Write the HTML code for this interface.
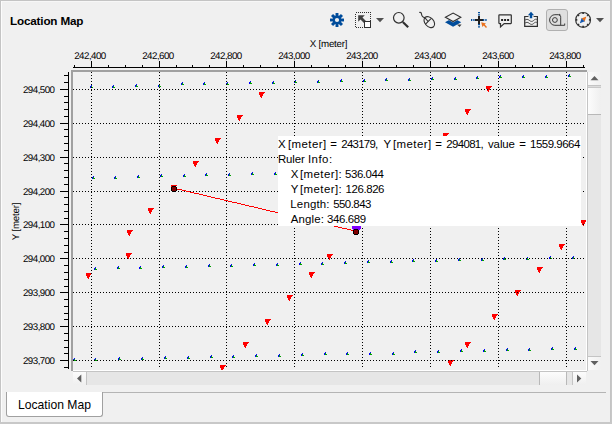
<!DOCTYPE html>
<html><head><meta charset="utf-8"><title>Location Map</title>
<style>
html,body{margin:0;padding:0}
body{width:612px;height:424px;background:#f0f0f0;position:relative;overflow:hidden;font-family:"Liberation Sans",sans-serif;color:#000}
.abs{position:absolute}
.title{position:absolute;left:10px;top:13px;font-size:11.700px;font-weight:bold;line-height:15px;white-space:nowrap;letter-spacing:-.17px}
.xl{position:absolute;top:51px;width:60px;text-align:center;font-size:9.750px;letter-spacing:-.53px;text-rendering:geometricPrecision;line-height:11px;white-space:nowrap}
.yl{position:absolute;left:9px;width:45.500px;text-align:right;font-size:9.750px;letter-spacing:-.53px;text-rendering:geometricPrecision;line-height:11px;white-space:nowrap}
.xt{position:absolute;left:298.500px;top:39px;width:60px;text-align:center;font-size:9.750px;letter-spacing:-.25px;text-rendering:geometricPrecision;line-height:11px;white-space:nowrap}
.yt{position:absolute;left:-14.5px;top:216px;width:60px;text-align:center;font-size:9.750px;letter-spacing:-.23px;text-rendering:geometricPrecision;line-height:11px;white-space:nowrap;transform:rotate(-90deg);transform-origin:50% 50%}
.tip{position:absolute;left:278px;top:136px;width:303px;height:90px;background:#fff;font-size:11.450px;line-height:15px;white-space:pre;overflow:hidden}
.tip span{position:absolute;white-space:pre}
.tab{position:absolute;left:6px;top:392px;width:95px;height:24px;background:#fff;border:1px solid #a0a0a0;border-top:none;border-radius:0 0 3px 3px;font-size:12.150px;line-height:27px;text-align:center;white-space:nowrap}
</style></head><body>
<!-- window borders -->
<div class="abs" style="left:0;top:0;width:612px;height:1px;background:#c4c4c4"></div>
<div class="abs" style="left:0;top:0;width:1px;height:424px;background:#c4c4c4"></div>
<div class="abs" style="left:0;top:422px;width:612px;height:2px;background:#c8c8c8"></div>
<div class="abs" style="left:610px;top:0;width:1px;height:422px;background:#c4c4c4"></div>
<div class="abs" style="left:611px;top:0;width:1px;height:422px;background:#c8c8c8"></div>
<div class="abs" style="left:1px;top:1px;width:1px;height:421px;background:#fcfcfc"></div>
<div class="abs" style="left:2px;top:1px;width:608px;height:1px;background:#f7f7f7"></div>
<div class="title">Location Map</div>
<svg width="612" height="40" viewBox="0 0 612 40" style="position:absolute;left:0;top:0">
<rect x="335.55" y="13" width="2.9" height="4" fill="#004c9b" transform="rotate(0 337 20)"/><rect x="335.55" y="13" width="2.9" height="4" fill="#004c9b" transform="rotate(45 337 20)"/><rect x="335.55" y="13" width="2.9" height="4" fill="#004c9b" transform="rotate(90 337 20)"/><rect x="335.55" y="13" width="2.9" height="4" fill="#004c9b" transform="rotate(135 337 20)"/><rect x="335.55" y="13" width="2.9" height="4" fill="#004c9b" transform="rotate(180 337 20)"/><rect x="335.55" y="13" width="2.9" height="4" fill="#004c9b" transform="rotate(225 337 20)"/><rect x="335.55" y="13" width="2.9" height="4" fill="#004c9b" transform="rotate(270 337 20)"/><rect x="335.55" y="13" width="2.9" height="4" fill="#004c9b" transform="rotate(315 337 20)"/><circle cx="337" cy="20" r="4.400" fill="#004c9b"/><circle cx="337" cy="20" r="2.100" fill="#f0f0f0"/>
<!-- selection -->
<rect x="355.5" y="12.5" width="15" height="15" fill="none" stroke="#303030" stroke-width="1" stroke-dasharray="1 1" shape-rendering="crispEdges"/>
<path d="M358.200 15.200h6.600l-2.300 2.300 3.700 3.700-2 2-3.700-3.700-2.300 2.300z" fill="#404040"/>
<rect x="364.5" y="21.5" width="6" height="6" fill="#fff" stroke="#303030" stroke-width="1" shape-rendering="crispEdges"/>
<path d="M376 18h8l-4 4.2z" fill="#505050"/>
<!-- magnifier -->
<circle cx="398.8" cy="17.8" r="5.3" fill="none" stroke="#303030" stroke-width="1.2"/>
<path d="M402.8 22l5.4 5.2" stroke="#303030" stroke-width="2.2" fill="none"/>
<!-- mouse -->
<g fill="none" stroke="#303030" stroke-width="1.100">
<path d="M419.200 12.400c1.400-.5 2.100 .3 2.300 1.700s.3 2 1.300 2.600l2.300 1.300"/>
<ellipse cx="429.300" cy="22.100" rx="6.300" ry="4.300" transform="rotate(47.600 429.300 22.100)"/>
<path d="M425.300 24.400L431 18.700M425 17.900L428.100 21.500"/>
</g>
<!-- layers -->
<path d="M445 22.200L453.100 26.800 461.200 22.200 453.100 17.800z" fill="#004c9b"/>
<path d="M444 17.300L453.100 12.300 462.200 17.300 453.100 22.600z" fill="#f0f0f0"/>
<path d="M445.400 17.300L453.100 13.100 460.800 17.300 453.100 21.500z" fill="none" stroke="#303030" stroke-width="1.1"/>
<path d="M457 24.400h4.600l-2 2.600z" fill="#404040"/>
<!-- crosshair -->
<path d="M475 20h8M479 16v8" stroke="#202020" stroke-width="2" fill="none" shape-rendering="crispEdges"/>
<path d="M471 20h4M483 20h4M479 12v4M479 24v4" stroke="#004c9b" stroke-width="2" stroke-dasharray="1.300 1" fill="none"/>
<path d="M481.200 22.200l4.800 1.200-1.300 1.200 2.300 2.300-1 1-2.300-2.300-1.300 1.300z" fill="#e8701c"/>
<!-- comment -->
<path d="M499.400 14.800h11.400a.5 .5 0 0 1 .5 .5v7.800a.5 .5 0 0 1-.5 .5h-6.600l-3.700 3.300v-3.300h-1.100a.5 .5 0 0 1-.5-.5v-7.800a.5 .5 0 0 1 .5-.5z" fill="none" stroke="#303030" stroke-width="1.200"/>
<rect x="501.100" y="19" width="2" height="2" fill="#202020"/><rect x="504.100" y="19" width="2" height="2" fill="#202020"/><rect x="507.100" y="19" width="2" height="2" fill="#202020"/>
<!-- export -->
<path d="M528.500 16.500h-3.800v9.900h12.700v-9.900h-3.800" fill="none" stroke="#303030" stroke-width="1.200"/>
<path d="M524.700 20.300c1.700-1.300 3-1.300 4.500 0s3 1.600 4.400 .2 2.500-1.700 3.800-.6M524.700 23.300c1.700-1.300 3-1.300 4.500 0s3 1.600 4.400 .2 2.500-1.700 3.800-.6" fill="none" stroke="#404040" stroke-width=".9"/>
<path d="M531 11.800l3.100 3.500h-1.900v3h-2.400v-3h-1.900z" fill="#004c9b"/>
<!-- ruler pressed -->
<rect x="546.500" y="9.500" width="21" height="21" rx="2.500" fill="#dfdfdf" stroke="#b0b0b0" stroke-width="1"/>
<g fill="none" stroke="#3a3a3a" stroke-width="1">
<circle cx="554.900" cy="20" r="2.400"/>
<path d="M558.400 14.700H554.900A5.300 5.300 0 0 0 554.900 25.300H564.700V23.500M558.400 14.700c1.500 0 2.300 .9 2.300 2.500V25.300"/>
<circle cx="559.600" cy="14.900" r=".5"/>
</g>
<!-- compass -->
<circle cx="583.1" cy="19.9" r="7.400" fill="none" stroke="#303030" stroke-width="1.200"/>
<path d="M590.30 19.90L588.90 19.90M588.19 24.99L587.20 24.00M583.10 27.10L583.10 25.70M578.01 24.99L579.00 24.00M575.90 19.90L577.30 19.90M578.01 14.81L579.00 15.80M583.10 12.70L583.10 14.10M588.19 14.81L587.20 15.80" stroke="#303030" stroke-width="1.700" fill="none"/>
<path d="M586.400 16.600l-5.100 1.900 1.800 1.400 1.400 1.800z" fill="#e8701c"/>
<path d="M579.800 23.200l5.100-1.900-1.800-1.400-1.400-1.800z" fill="#1458b0"/>
<path d="M596 18h8l-4 4.200z" fill="#505050"/>
</svg>
<div class="xt">X [meter]</div>
<div class="yt">Y [meter]</div>
<div class="xl" style="left:60px">242,400</div><div class="xl" style="left:128px">242,600</div><div class="xl" style="left:196px">242,800</div><div class="xl" style="left:264px">243,000</div><div class="xl" style="left:332px">243,200</div><div class="xl" style="left:400px">243,400</div><div class="xl" style="left:468px">243,600</div><div class="xl" style="left:535px">243,800</div><div class="yl" style="top:85px">294,500</div><div class="yl" style="top:119px">294,400</div><div class="yl" style="top:153px">294,300</div><div class="yl" style="top:187px">294,200</div><div class="yl" style="top:220px">294,100</div><div class="yl" style="top:254px">294,000</div><div class="yl" style="top:288px">293,900</div><div class="yl" style="top:322px">293,800</div><div class="yl" style="top:356px">293,700</div>
<svg width="612" height="424" viewBox="0 0 612 424" shape-rendering="crispEdges" style="position:absolute;left:0;top:0">
<defs>
<clipPath id="cv"><rect x="73" y="72" width="513" height="298"/></clipPath>
</defs>
<rect x="71" y="70" width="516" height="2" fill="#a0a0a0"/><rect x="71" y="70" width="2" height="301" fill="#a0a0a0"/><rect x="73" y="370" width="514" height="1" fill="#ffffff"/><rect x="73" y="371" width="514" height="1" fill="#c4c4c4"/><rect x="587" y="72" width="1" height="299" fill="#c4c4c4"/><rect x="586" y="72" width="1" height="299" fill="#ffffff"/><rect x="73" y="67" width="512" height="1" fill="#000"/><rect x="74" y="65" width="1" height="2" fill="#000"/><rect x="91" y="61" width="1" height="6" fill="#000"/><rect x="108" y="65" width="1" height="2" fill="#000"/><rect x="125" y="65" width="1" height="2" fill="#000"/><rect x="142" y="65" width="1" height="2" fill="#000"/><rect x="159" y="61" width="1" height="6" fill="#000"/><rect x="176" y="65" width="1" height="2" fill="#000"/><rect x="192" y="65" width="1" height="2" fill="#000"/><rect x="209" y="65" width="1" height="2" fill="#000"/><rect x="226" y="61" width="1" height="6" fill="#000"/><rect x="243" y="65" width="1" height="2" fill="#000"/><rect x="260" y="65" width="1" height="2" fill="#000"/><rect x="277" y="65" width="1" height="2" fill="#000"/><rect x="294" y="61" width="1" height="6" fill="#000"/><rect x="311" y="65" width="1" height="2" fill="#000"/><rect x="328" y="65" width="1" height="2" fill="#000"/><rect x="345" y="65" width="1" height="2" fill="#000"/><rect x="362" y="61" width="1" height="6" fill="#000"/><rect x="379" y="65" width="1" height="2" fill="#000"/><rect x="396" y="65" width="1" height="2" fill="#000"/><rect x="413" y="65" width="1" height="2" fill="#000"/><rect x="430" y="61" width="1" height="6" fill="#000"/><rect x="447" y="65" width="1" height="2" fill="#000"/><rect x="464" y="65" width="1" height="2" fill="#000"/><rect x="481" y="65" width="1" height="2" fill="#000"/><rect x="498" y="61" width="1" height="6" fill="#000"/><rect x="515" y="65" width="1" height="2" fill="#000"/><rect x="532" y="65" width="1" height="2" fill="#000"/><rect x="549" y="65" width="1" height="2" fill="#000"/><rect x="566" y="61" width="1" height="6" fill="#000"/><rect x="583" y="65" width="1" height="2" fill="#000"/><rect x="68" y="72" width="1" height="297" fill="#000"/><rect x="64" y="75" width="4" height="1" fill="#000"/><rect x="64" y="82" width="4" height="1" fill="#000"/><rect x="60" y="89" width="8" height="1" fill="#000"/><rect x="64" y="96" width="4" height="1" fill="#000"/><rect x="64" y="102" width="4" height="1" fill="#000"/><rect x="64" y="109" width="4" height="1" fill="#000"/><rect x="64" y="116" width="4" height="1" fill="#000"/><rect x="60" y="123" width="8" height="1" fill="#000"/><rect x="64" y="129" width="4" height="1" fill="#000"/><rect x="64" y="136" width="4" height="1" fill="#000"/><rect x="64" y="143" width="4" height="1" fill="#000"/><rect x="64" y="150" width="4" height="1" fill="#000"/><rect x="60" y="157" width="8" height="1" fill="#000"/><rect x="64" y="163" width="4" height="1" fill="#000"/><rect x="64" y="170" width="4" height="1" fill="#000"/><rect x="64" y="177" width="4" height="1" fill="#000"/><rect x="64" y="184" width="4" height="1" fill="#000"/><rect x="60" y="191" width="8" height="1" fill="#000"/><rect x="64" y="197" width="4" height="1" fill="#000"/><rect x="64" y="204" width="4" height="1" fill="#000"/><rect x="64" y="211" width="4" height="1" fill="#000"/><rect x="64" y="218" width="4" height="1" fill="#000"/><rect x="60" y="224" width="8" height="1" fill="#000"/><rect x="64" y="231" width="4" height="1" fill="#000"/><rect x="64" y="238" width="4" height="1" fill="#000"/><rect x="64" y="245" width="4" height="1" fill="#000"/><rect x="64" y="252" width="4" height="1" fill="#000"/><rect x="60" y="258" width="8" height="1" fill="#000"/><rect x="64" y="265" width="4" height="1" fill="#000"/><rect x="64" y="272" width="4" height="1" fill="#000"/><rect x="64" y="279" width="4" height="1" fill="#000"/><rect x="64" y="286" width="4" height="1" fill="#000"/><rect x="60" y="292" width="8" height="1" fill="#000"/><rect x="64" y="299" width="4" height="1" fill="#000"/><rect x="64" y="306" width="4" height="1" fill="#000"/><rect x="64" y="313" width="4" height="1" fill="#000"/><rect x="64" y="319" width="4" height="1" fill="#000"/><rect x="60" y="326" width="8" height="1" fill="#000"/><rect x="64" y="333" width="4" height="1" fill="#000"/><rect x="64" y="340" width="4" height="1" fill="#000"/><rect x="64" y="347" width="4" height="1" fill="#000"/><rect x="64" y="353" width="4" height="1" fill="#000"/><rect x="60" y="360" width="8" height="1" fill="#000"/><rect x="64" y="367" width="4" height="1" fill="#000"/>
<g clip-path="url(#cv)">
<path d="M91 85h1v1h-1zM90 86h1v2h-1zM113 85h1v1h-1zM112 86h1v2h-1zM136 84h1v1h-1zM135 85h1v2h-1zM159 84h1v1h-1zM158 85h1v2h-1zM182 82h1v1h-1zM181 83h1v2h-1zM204 82h1v1h-1zM203 83h1v2h-1zM227 82h1v1h-1zM226 83h1v2h-1zM250 81h1v1h-1zM249 82h1v2h-1zM273 81h1v1h-1zM272 82h1v2h-1zM295 80h1v1h-1zM294 81h1v2h-1zM318 80h1v1h-1zM317 81h1v2h-1zM341 79h1v1h-1zM340 80h1v2h-1zM364 79h1v1h-1zM363 80h1v2h-1zM386 78h1v1h-1zM385 79h1v2h-1zM409 78h1v1h-1zM408 79h1v2h-1zM432 77h1v1h-1zM431 78h1v2h-1zM455 77h1v1h-1zM454 78h1v2h-1zM477 76h1v1h-1zM476 77h1v2h-1zM500 75h1v1h-1zM499 76h1v2h-1zM523 75h1v1h-1zM522 76h1v2h-1zM546 75h1v1h-1zM545 76h1v2h-1zM569 74h1v1h-1zM568 75h1v2h-1zM93 176h1v1h-1zM92 177h1v2h-1zM115 176h1v1h-1zM114 177h1v2h-1zM138 175h1v1h-1zM137 176h1v2h-1zM161 174h1v1h-1zM160 175h1v2h-1zM184 174h1v1h-1zM183 175h1v2h-1zM206 173h1v1h-1zM205 174h1v2h-1zM229 173h1v1h-1zM228 174h1v2h-1zM252 172h1v1h-1zM251 173h1v2h-1zM275 172h1v1h-1zM274 173h1v2h-1zM95 267h1v1h-1zM94 268h1v2h-1zM118 266h1v1h-1zM117 267h1v2h-1zM140 266h1v1h-1zM139 267h1v2h-1zM163 265h1v1h-1zM162 266h1v2h-1zM186 265h1v1h-1zM185 266h1v2h-1zM209 264h1v1h-1zM208 265h1v2h-1zM231 264h1v1h-1zM230 265h1v2h-1zM254 263h1v1h-1zM253 264h1v2h-1zM277 263h1v1h-1zM276 264h1v2h-1zM300 262h1v1h-1zM299 263h1v2h-1zM322 262h1v1h-1zM321 263h1v2h-1zM345 261h1v1h-1zM344 262h1v2h-1zM368 260h1v1h-1zM367 261h1v2h-1zM391 260h1v1h-1zM390 261h1v2h-1zM413 259h1v1h-1zM412 260h1v2h-1zM436 259h1v1h-1zM435 260h1v2h-1zM459 258h1v1h-1zM458 259h1v2h-1zM482 258h1v1h-1zM481 259h1v2h-1zM504 257h1v1h-1zM503 258h1v2h-1zM527 257h1v1h-1zM526 258h1v2h-1zM550 256h1v1h-1zM549 257h1v2h-1zM573 256h1v1h-1zM572 257h1v2h-1zM74 358h1v1h-1zM73 359h1v2h-1zM95 358h1v1h-1zM94 359h1v2h-1zM119 357h1v1h-1zM118 358h1v2h-1zM142 357h1v1h-1zM141 358h1v2h-1zM165 356h1v1h-1zM164 357h1v2h-1zM188 356h1v1h-1zM187 357h1v2h-1zM211 355h1v1h-1zM210 356h1v2h-1zM233 355h1v1h-1zM232 356h1v2h-1zM256 354h1v1h-1zM255 355h1v2h-1zM279 354h1v1h-1zM278 355h1v2h-1zM302 353h1v1h-1zM301 354h1v2h-1zM325 352h1v1h-1zM324 353h1v2h-1zM347 352h1v1h-1zM346 353h1v2h-1zM370 352h1v1h-1zM369 353h1v2h-1zM393 352h1v1h-1zM392 353h1v2h-1zM415 350h1v1h-1zM414 351h1v2h-1zM438 350h1v1h-1zM437 351h1v2h-1zM461 349h1v1h-1zM460 350h1v2h-1zM484 349h1v1h-1zM483 350h1v2h-1zM507 348h1v1h-1zM506 349h1v2h-1zM529 348h1v1h-1zM528 349h1v2h-1zM552 347h1v1h-1zM551 348h1v2h-1zM575 347h1v1h-1zM574 348h1v2h-1z" fill="#0000ff"/><path d="M91 86h1v2h-1zM92 87h1v1h-1zM113 86h1v2h-1zM114 87h1v1h-1zM136 85h1v2h-1zM137 86h1v1h-1zM159 85h1v2h-1zM160 86h1v1h-1zM182 83h1v2h-1zM183 84h1v1h-1zM204 83h1v2h-1zM205 84h1v1h-1zM227 83h1v2h-1zM228 84h1v1h-1zM250 82h1v2h-1zM251 83h1v1h-1zM273 82h1v2h-1zM274 83h1v1h-1zM295 81h1v2h-1zM296 82h1v1h-1zM318 81h1v2h-1zM319 82h1v1h-1zM341 80h1v2h-1zM342 81h1v1h-1zM364 80h1v2h-1zM365 81h1v1h-1zM386 79h1v2h-1zM387 80h1v1h-1zM409 79h1v2h-1zM410 80h1v1h-1zM432 78h1v2h-1zM433 79h1v1h-1zM455 78h1v2h-1zM456 79h1v1h-1zM477 77h1v2h-1zM478 78h1v1h-1zM500 76h1v2h-1zM501 77h1v1h-1zM523 76h1v2h-1zM524 77h1v1h-1zM546 76h1v2h-1zM547 77h1v1h-1zM569 75h1v2h-1zM570 76h1v1h-1zM93 177h1v2h-1zM94 178h1v1h-1zM115 177h1v2h-1zM116 178h1v1h-1zM138 176h1v2h-1zM139 177h1v1h-1zM161 175h1v2h-1zM162 176h1v1h-1zM184 175h1v2h-1zM185 176h1v1h-1zM206 174h1v2h-1zM207 175h1v1h-1zM229 174h1v2h-1zM230 175h1v1h-1zM252 173h1v2h-1zM253 174h1v1h-1zM275 173h1v2h-1zM276 174h1v1h-1zM95 268h1v2h-1zM96 269h1v1h-1zM118 267h1v2h-1zM119 268h1v1h-1zM140 267h1v2h-1zM141 268h1v1h-1zM163 266h1v2h-1zM164 267h1v1h-1zM186 266h1v2h-1zM187 267h1v1h-1zM209 265h1v2h-1zM210 266h1v1h-1zM231 265h1v2h-1zM232 266h1v1h-1zM254 264h1v2h-1zM255 265h1v1h-1zM277 264h1v2h-1zM278 265h1v1h-1zM300 263h1v2h-1zM301 264h1v1h-1zM322 263h1v2h-1zM323 264h1v1h-1zM345 262h1v2h-1zM346 263h1v1h-1zM368 261h1v2h-1zM369 262h1v1h-1zM391 261h1v2h-1zM392 262h1v1h-1zM413 260h1v2h-1zM414 261h1v1h-1zM436 260h1v2h-1zM437 261h1v1h-1zM459 259h1v2h-1zM460 260h1v1h-1zM482 259h1v2h-1zM483 260h1v1h-1zM504 258h1v2h-1zM505 259h1v1h-1zM527 258h1v2h-1zM528 259h1v1h-1zM550 257h1v2h-1zM551 258h1v1h-1zM573 257h1v2h-1zM574 258h1v1h-1zM74 359h1v2h-1zM75 360h1v1h-1zM95 359h1v2h-1zM96 360h1v1h-1zM119 358h1v2h-1zM120 359h1v1h-1zM142 358h1v2h-1zM143 359h1v1h-1zM165 357h1v2h-1zM166 358h1v1h-1zM188 357h1v2h-1zM189 358h1v1h-1zM211 356h1v2h-1zM212 357h1v1h-1zM233 356h1v2h-1zM234 357h1v1h-1zM256 355h1v2h-1zM257 356h1v1h-1zM279 355h1v2h-1zM280 356h1v1h-1zM302 354h1v2h-1zM303 355h1v1h-1zM325 353h1v2h-1zM326 354h1v1h-1zM347 353h1v2h-1zM348 354h1v1h-1zM370 353h1v2h-1zM371 354h1v1h-1zM393 353h1v2h-1zM394 354h1v1h-1zM415 351h1v2h-1zM416 352h1v1h-1zM438 351h1v2h-1zM439 352h1v1h-1zM461 350h1v2h-1zM462 351h1v1h-1zM484 350h1v2h-1zM485 351h1v1h-1zM507 349h1v2h-1zM508 350h1v1h-1zM529 349h1v2h-1zM530 350h1v1h-1zM552 348h1v2h-1zM553 349h1v1h-1zM575 348h1v2h-1zM576 349h1v1h-1z" fill="#00a000"/>
<path d="M259 92h6v1h-1v1h-1v2h-1v2h-1v-1h-1v-2h-1zM237 115h6v1h-1v1h-1v2h-1v2h-1v-1h-1v-2h-1zM215 138h6v1h-1v1h-1v2h-1v2h-1v-1h-1v-2h-1zM193 161h6v1h-1v1h-1v2h-1v2h-1v-1h-1v-2h-1zM171 185h6v1h-1v1h-1v2h-1v2h-1v-1h-1v-2h-1zM148 208h6v1h-1v1h-1v2h-1v2h-1v-1h-1v-2h-1zM127 230h6v1h-1v1h-1v2h-1v2h-1v-1h-1v-2h-1zM126 253h6v1h-1v1h-1v2h-1v2h-1v-1h-1v-2h-1zM86 273h6v1h-1v1h-1v2h-1v2h-1v-1h-1v-2h-1zM486 86h6v1h-1v1h-1v2h-1v2h-1v-1h-1v-2h-1zM465 109h6v1h-1v1h-1v2h-1v2h-1v-1h-1v-2h-1zM443 133h6v1h-1v1h-1v2h-1v2h-1v-1h-1v-2h-1zM327 254h6v1h-1v1h-1v2h-1v2h-1v-1h-1v-2h-1zM309 272h6v1h-1v1h-1v2h-1v2h-1v-1h-1v-2h-1zM287 295h6v1h-1v1h-1v2h-1v2h-1v-1h-1v-2h-1zM265 319h6v1h-1v1h-1v2h-1v2h-1v-1h-1v-2h-1zM243 342h6v1h-1v1h-1v2h-1v2h-1v-1h-1v-2h-1zM220 365h6v1h-1v1h-1v2h-1v2h-1v-1h-1v-2h-1zM581 220h6v1h-1v1h-1v2h-1v2h-1v-1h-1v-2h-1zM559 244h6v1h-1v1h-1v2h-1v2h-1v-1h-1v-2h-1zM537 267h6v1h-1v1h-1v2h-1v2h-1v-1h-1v-2h-1zM515 290h6v1h-1v1h-1v2h-1v2h-1v-1h-1v-2h-1zM492 314h6v1h-1v1h-1v2h-1v2h-1v-1h-1v-2h-1zM465 342h6v1h-1v1h-1v2h-1v2h-1v-1h-1v-2h-1zM448 360h6v1h-1v1h-1v2h-1v2h-1v-1h-1v-2h-1z" fill="#ff0000"/>
<path d="M91.5 72V369" stroke="#000" stroke-width="1" stroke-dasharray="1 2" fill="none"/><path d="M159.5 72V369" stroke="#000" stroke-width="1" stroke-dasharray="1 2" fill="none"/><path d="M226.5 72V369" stroke="#000" stroke-width="1" stroke-dasharray="1 2" fill="none"/><path d="M294.5 72V369" stroke="#000" stroke-width="1" stroke-dasharray="1 2" fill="none"/><path d="M362.5 72V369" stroke="#000" stroke-width="1" stroke-dasharray="1 2" fill="none"/><path d="M430.5 72V369" stroke="#000" stroke-width="1" stroke-dasharray="1 2" fill="none"/><path d="M498.5 72V369" stroke="#000" stroke-width="1" stroke-dasharray="1 2" fill="none"/><path d="M566.5 72V369" stroke="#000" stroke-width="1" stroke-dasharray="1 2" fill="none"/><path d="M73 89.5H586" stroke="#000" stroke-width="1" stroke-dasharray="1 2" fill="none"/><path d="M73 123.5H586" stroke="#000" stroke-width="1" stroke-dasharray="1 2" fill="none"/><path d="M73 157.5H586" stroke="#000" stroke-width="1" stroke-dasharray="1 2" fill="none"/><path d="M73 191.5H586" stroke="#000" stroke-width="1" stroke-dasharray="1 2" fill="none"/><path d="M73 224.5H586" stroke="#000" stroke-width="1" stroke-dasharray="1 2" fill="none"/><path d="M73 258.5H586" stroke="#000" stroke-width="1" stroke-dasharray="1 2" fill="none"/><path d="M73 292.5H586" stroke="#000" stroke-width="1" stroke-dasharray="1 2" fill="none"/><path d="M73 326.5H586" stroke="#000" stroke-width="1" stroke-dasharray="1 2" fill="none"/><path d="M73 360.5H586" stroke="#000" stroke-width="1" stroke-dasharray="1 2" fill="none"/>
<rect x="177" y="189" width="5" height="1" fill="#ff0000"/><rect x="182" y="190" width="4" height="1" fill="#ff0000"/><rect x="186" y="191" width="4" height="1" fill="#ff0000"/><rect x="190" y="192" width="4" height="1" fill="#ff0000"/><rect x="194" y="193" width="5" height="1" fill="#ff0000"/><rect x="199" y="194" width="4" height="1" fill="#ff0000"/><rect x="203" y="195" width="4" height="1" fill="#ff0000"/><rect x="207" y="196" width="4" height="1" fill="#ff0000"/><rect x="211" y="197" width="4" height="1" fill="#ff0000"/><rect x="215" y="198" width="5" height="1" fill="#ff0000"/><rect x="220" y="199" width="4" height="1" fill="#ff0000"/><rect x="224" y="200" width="4" height="1" fill="#ff0000"/><rect x="228" y="201" width="4" height="1" fill="#ff0000"/><rect x="232" y="202" width="5" height="1" fill="#ff0000"/><rect x="237" y="203" width="4" height="1" fill="#ff0000"/><rect x="241" y="204" width="4" height="1" fill="#ff0000"/><rect x="245" y="205" width="4" height="1" fill="#ff0000"/><rect x="249" y="206" width="5" height="1" fill="#ff0000"/><rect x="254" y="207" width="4" height="1" fill="#ff0000"/><rect x="258" y="208" width="4" height="1" fill="#ff0000"/><rect x="262" y="209" width="4" height="1" fill="#ff0000"/><rect x="266" y="210" width="4" height="1" fill="#ff0000"/><rect x="270" y="211" width="5" height="1" fill="#ff0000"/><rect x="275" y="212" width="4" height="1" fill="#ff0000"/><rect x="279" y="213" width="4" height="1" fill="#ff0000"/><rect x="283" y="214" width="4" height="1" fill="#ff0000"/><rect x="287" y="215" width="5" height="1" fill="#ff0000"/><rect x="292" y="216" width="4" height="1" fill="#ff0000"/><rect x="296" y="217" width="4" height="1" fill="#ff0000"/><rect x="300" y="218" width="4" height="1" fill="#ff0000"/><rect x="304" y="219" width="5" height="1" fill="#ff0000"/><rect x="309" y="220" width="4" height="1" fill="#ff0000"/><rect x="313" y="221" width="4" height="1" fill="#ff0000"/><rect x="317" y="222" width="4" height="1" fill="#ff0000"/><rect x="321" y="223" width="5" height="1" fill="#ff0000"/><rect x="326" y="224" width="4" height="1" fill="#ff0000"/><rect x="330" y="225" width="4" height="1" fill="#ff0000"/><rect x="334" y="226" width="4" height="1" fill="#ff0000"/><rect x="338" y="227" width="4" height="1" fill="#ff0000"/><rect x="342" y="228" width="5" height="1" fill="#ff0000"/><rect x="347" y="229" width="4" height="1" fill="#ff0000"/><rect x="351" y="230" width="3" height="1" fill="#ff0000"/>
<!-- ruler start handle -->
<path d="M172 186h4v1h1v4h-1v1h-4v-1h-1v-4h1z" fill="#000"/><rect x="172" y="187" width="4" height="4" fill="#800000"/>
<!-- ruler end handle -->
<rect x="352" y="222" width="9" height="7" fill="#8000ff"/><rect x="353" y="229" width="7" height="1" fill="#8000ff"/>
<path d="M354 229h4v1h1v4h-1v1h-4v-1h-1v-4h1z" fill="#000"/><rect x="354" y="230" width="4" height="4" fill="#800000"/>
</g>
</svg>
<div class="tip"><span style="left:0px;top:1px">X </span><span style="left:10px;top:1px;letter-spacing:0.43px">[meter] </span><span style="left:52.2px;top:1px">= </span><span style="left:63.3px;top:1px;letter-spacing:-0.74px">243179, </span><span style="left:105.5px;top:1px">Y </span><span style="left:115px;top:1px;letter-spacing:0.43px">[meter] </span><span style="left:157.2px;top:1px">= </span><span style="left:168.3px;top:1px;letter-spacing:-0.65px">294081, </span><span style="left:210px;top:1px;letter-spacing:-0.1px">value </span><span style="left:241.2px;top:1px">= </span><span style="left:252px;top:1px;letter-spacing:-0.47px">1559.9664
</span><span style="left:-0.1px;top:16px;letter-spacing:-0.12px">Ruler </span><span style="left:29.9px;top:16px;letter-spacing:0.5px">Info:
</span><span style="left:12.7px;top:31px">X </span><span style="left:22px;top:31px;letter-spacing:0.43px">[meter]: </span><span style="left:67px;top:31px;letter-spacing:-0.42px">536.044
</span><span style="left:12.7px;top:46px">Y </span><span style="left:22px;top:46px;letter-spacing:0.43px">[meter]: </span><span style="left:67.6px;top:46px;letter-spacing:-0.41px">126.826
</span><span style="left:12.3px;top:61px;letter-spacing:0.18px">Length: </span><span style="left:55.2px;top:61px;letter-spacing:-0.52px">550.843
</span><span style="left:12.7px;top:76px;letter-spacing:0.18px">Angle: </span><span style="left:49px;top:76px;letter-spacing:-0.37px">346.689</span></div>
<!-- vertical scrollbar -->
<div class="abs" style="left:588px;top:72px;width:13px;height:298px;background:#e6e6e6"></div>
<div class="abs" style="left:588px;top:72px;width:13px;height:13px;background:linear-gradient(90deg,#fafafa,#f0f0f0)"></div>
<div class="abs" style="left:588px;top:85px;width:13px;height:1px;background:#c4c4c4"></div>
<div class="abs" style="left:588px;top:86px;width:13px;height:29px;background:linear-gradient(90deg,#fcfcfc,#efefef);border-top:1px solid #dcdcdc;box-sizing:border-box"></div>
<div class="abs" style="left:588px;top:87px;width:13px;height:1px;background:#c8c8c8"></div>
<div class="abs" style="left:588px;top:114px;width:13px;height:1px;background:#b8b8b8"></div>
<div class="abs" style="left:588px;top:357px;width:13px;height:13px;background:linear-gradient(90deg,#fafafa,#f0f0f0)"></div>
<div class="abs" style="left:588px;top:356px;width:13px;height:1px;background:#c4c4c4"></div>
<svg class="abs" style="left:588px;top:72px" width="13" height="298" viewBox="0 0 13 298"><path d="M2.500 8.200h8l-4-4.200z" fill="#606060"/><path d="M2.500 289h8l-4 4.200z" fill="#606060"/></svg>
<!-- horizontal scrollbar -->
<div class="abs" style="left:73px;top:372px;width:513px;height:13px;background:linear-gradient(#fcfcfc,#efefef)"></div>
<div class="abs" style="left:86px;top:372px;width:1px;height:13px;background:#c4c4c4"></div>
<div class="abs" style="left:87px;top:372px;width:452px;height:13px;background:#e6e6e6"></div>
<div class="abs" style="left:539px;top:372px;width:1px;height:13px;background:#b8b8b8"></div>
<div class="abs" style="left:566px;top:372px;width:1px;height:13px;background:#b8b8b8"></div>
<div class="abs" style="left:567px;top:372px;width:5px;height:13px;background:#e6e6e6"></div>
<div class="abs" style="left:572px;top:372px;width:1px;height:13px;background:#c4c4c4"></div>
<svg class="abs" style="left:73px;top:372px" width="513" height="13" viewBox="0 0 513 13"><path d="M8.300 2.500v8l-4.300-4z" fill="#606060"/><path d="M504 2.500v8l4.300-4z" fill="#606060"/></svg>
<!-- tab pane line + tab -->
<div class="abs" style="left:102px;top:392px;width:504px;height:1px;background:#b4b4b4"></div>
<div class="tab">Location Map</div>
</body></html>
